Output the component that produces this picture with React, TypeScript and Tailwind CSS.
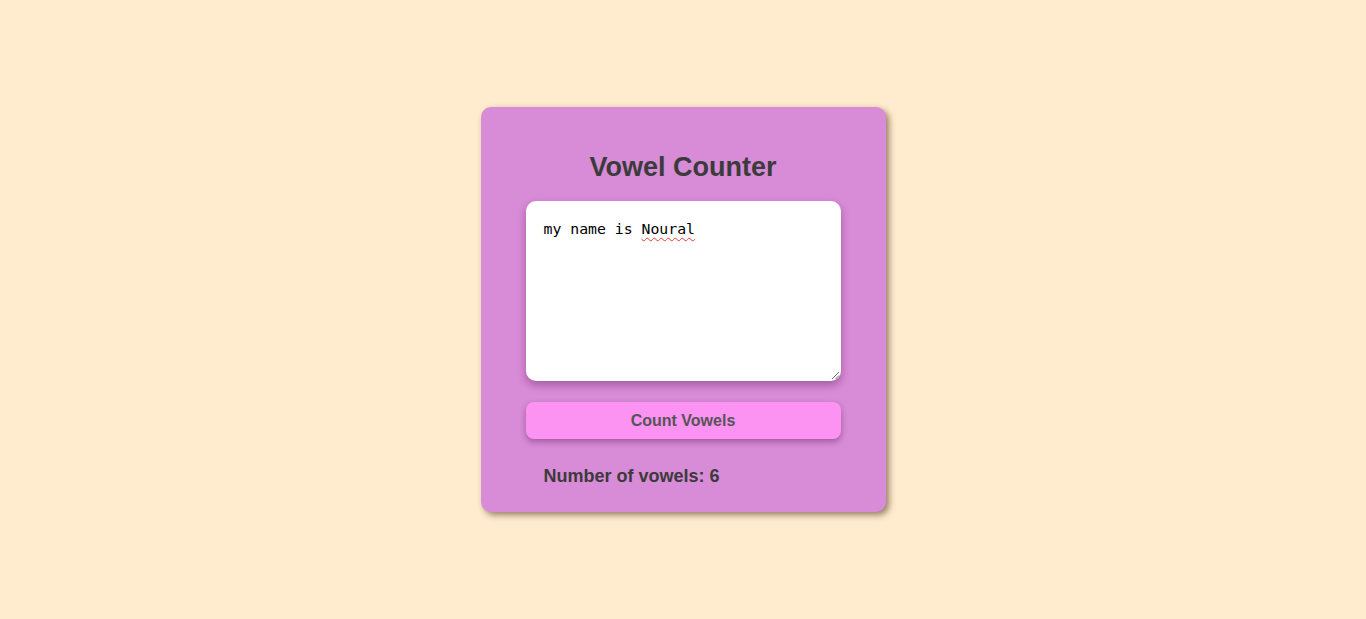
import React from "react";

export default function App() {
    const text = "my name is Noural";
    const count = (text.match(/[aeiou]/gi) || []).length;

    return (
        <div className="min-h-screen w-full bg-[#ffebcd] flex items-center justify-center font-['Liberation_Sans',Arial,sans-serif]">
            <div className="w-[405px] bg-[#d88bd6] rounded-[10px] shadow-[3px_3px_6px_rgba(60,40,20,0.55)] px-[45px] pt-[44px] pb-[25px] flex flex-col">
                <h1 className="text-[27px] leading-[32px] font-bold text-[#3b3b3b] text-center">Vowel Counter</h1>

                <div className="relative mt-[18px] h-[180px] bg-white rounded-[10px] shadow-[0_4px_8px_rgba(80,20,80,0.4)] px-[18px] pt-[19px]">
                    <p className="font-['DejaVu_Sans_Mono','Liberation_Mono',monospace] text-[14.8px] leading-[18px] text-black">
                        my name is{" "}
                        <span className="underline decoration-wavy decoration-[#e53935] decoration-1 underline-offset-[3px]">Noural</span>
                    </p>
                    <svg className="absolute right-[1px] bottom-[1px]" width="9" height="9" viewBox="0 0 9 9">
                        <path d="M8 1 L1 8 M8 4.5 L4.5 8" stroke="#6b6b6b" strokeWidth="1" fill="none"/>
                    </svg>
                </div>

                <button className="mt-[21px] h-[37px] w-full rounded-[8px] bg-[#fc92f2] shadow-[0_3px_6px_rgba(80,20,80,0.4)] text-[16px] font-bold text-[#555]">
                    Count Vowels
                </button>

                <p className="mt-[27px] px-[18px] text-[18px] leading-[21px] font-bold text-[#3b3b3b]">
                    Number of vowels: {count}
                </p>
            </div>
        </div>
    );
}
